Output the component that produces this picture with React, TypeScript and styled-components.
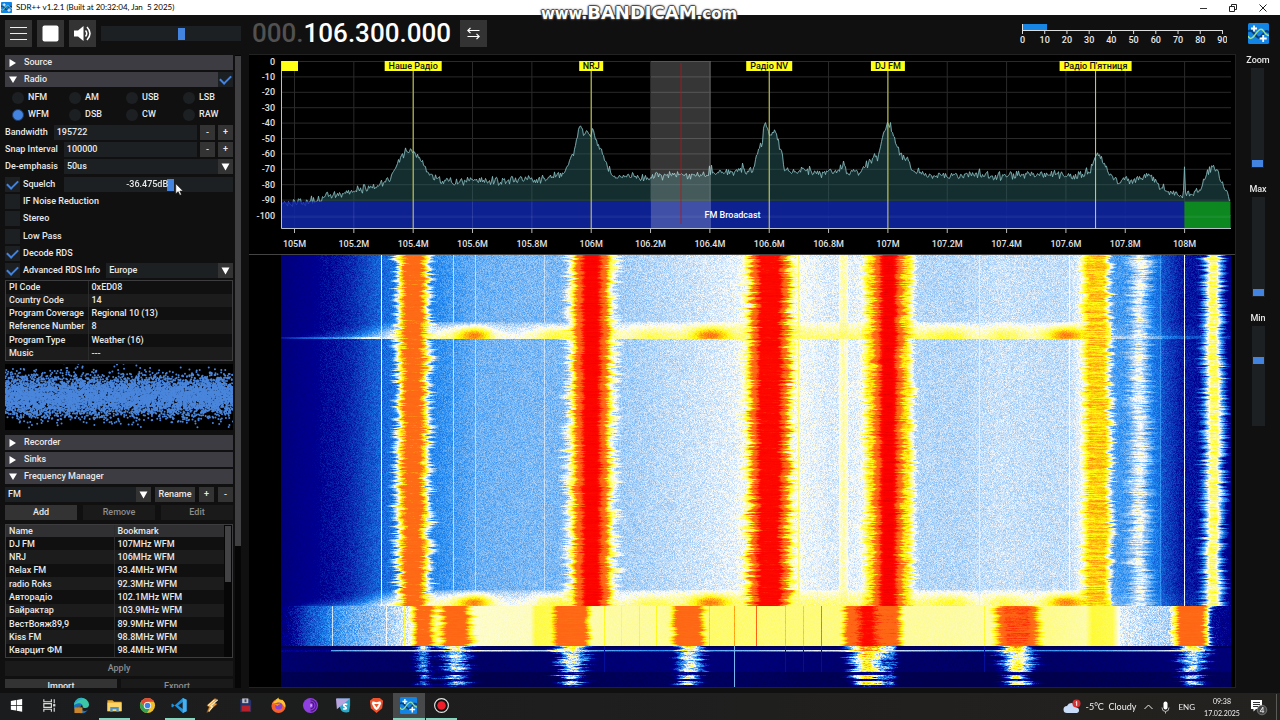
import React, { useLayoutEffect, useRef } from "react";
import styled, { createGlobalStyle, css } from "styled-components";

const color = {
  bg: "#101010",
  field: "#1d2022",
  button: "#333334",
  header: "#3c3c42",
  accent: "#4384e0",
  text: "#e8e8e8",
  muted: "#8c8c8c",
  line: "#2b2b2c",
};

const GlobalStyle = createGlobalStyle`
  * { box-sizing: border-box; }
  body {
    margin: 0;
    background: ${color.bg};
    color: ${color.text};
    font: 500 9px/13px Roboto, "Liberation Sans", sans-serif;
  }
  button, input, select { font: inherit; color: inherit; margin: 0; border: 0; border-radius: 0; }
  button { padding: 0; cursor: pointer; }
`;

/* ---------- deterministic noise ---------- */

function makeRandom(seed: number) {
  let s = seed;
  return () => {
    s = (s + 0x6d2b79f5) | 0;
    let t = Math.imul(s ^ (s >>> 15), 1 | s);
    t = (t + Math.imul(t ^ (t >>> 7), 61 | t)) ^ t;
    return ((t ^ (t >>> 14)) >>> 0) / 4294967296;
  };
}

type Point = [number, number];

function interpolate(points: Point[], x: number) {
  if (x <= points[0][0]) return points[0][1];
  for (let i = 1; i < points.length; i++) {
    if (x <= points[i][0]) {
      const [x0, y0] = points[i - 1];
      const [x1, y1] = points[i];
      return y0 + ((y1 - y0) * (x - x0)) / (x1 - x0);
    }
  }
  return points[points.length - 1][1];
}

/* ---------- shell ---------- */

const Page = styled.div`
  display: flex;
  flex-direction: column;
  height: 100vh;
  position: relative;
  overflow: hidden;
`;

const TitleBar = styled.header`
  display: flex;
  align-items: center;
  gap: 4px;
  height: 15px;
  padding: 0 12px 0 1px;
  background: #fff;
  color: #000;
  font: 400 8px/15px Lato, sans-serif;
`;

const WindowTitle = styled.h1`
  flex: 1;
  margin: 0;
  font: inherit;
  white-space: pre;
`;

const WindowControls = styled.div`
  display: flex;
  gap: 20px;
`;

const WindowButton = styled.button`
  display: grid;
  place-items: center;
  width: 10px;
  height: 15px;
  background: none;
`;

const Watermark = styled.div`
  position: absolute;
  top: 3px;
  left: 0;
  right: 2px;
  text-align: center;
  pointer-events: none;
  color: #fff;
  font: 700 15px/20px "DejaVu Sans", sans-serif;
  text-shadow: 0 0 1px #333, 1px 0 1px #444, -1px 0 1px #444, 0 1px 1px #444, 0 -1px 1px #444, 0 0 3px #666;
`;

const WatermarkName = styled.span`
  font-size: 18px;
`;

const Toolbar = styled.div`
  display: flex;
  align-items: center;
  height: 39px;
  padding: 0 11px 2px 5px;
  gap: 5px;
`;

const ToolButton = styled.button`
  display: grid;
  place-items: center;
  width: 27px;
  height: 27px;
  background: ${color.button};
`;

const Frequency = styled.output`
  margin: 0 4px 0 6px;
  font: 500 26px/27px Roboto, sans-serif;
  color: #fff;
`;

const LeadingZeros = styled.span`
  color: #515151;
`;

const Spacer = styled.div`
  flex: 1;
`;

const Body = styled.main`
  flex: 1;
  min-height: 0;
  display: grid;
  grid-template-columns: 249px minmax(0, 1fr) 44px;
`;

/* ---------- controls ---------- */

const rangeThumb = css`
  appearance: none;
  background: ${color.accent};
  border: 0;
  border-radius: 0;
`;

const Slider = styled.input.attrs({ type: "range" })<{ $width?: number }>`
  appearance: none;
  flex: ${(p) => (p.$width ? "none" : 1)};
  width: ${(p) => (p.$width ? `${p.$width}px` : "100%")};
  min-width: 0;
  height: 15px;
  padding: 1px 2px;
  background: ${color.field};
  &::-webkit-slider-thumb {
    ${rangeThumb}
    width: 7px;
    height: 12px;
  }
`;

const VerticalSlider = styled.input.attrs({ type: "range" })`
  appearance: none;
  writing-mode: vertical-lr;
  direction: rtl;
  width: 13px;
  height: 100px;
  padding: 1px;
  background: ${color.field};
  &::-webkit-slider-thumb {
    ${rangeThumb}
    width: 11px;
    height: 7px;
  }
`;

const Sidebar = styled.aside`
  display: flex;
  gap: 2px;
  padding: 1px 8px 5px 5px;
  min-height: 0;
`;

const Modules = styled.div`
  flex: 1;
  min-width: 0;
  overflow: hidden;
  display: flex;
  flex-direction: column;
`;

const SidebarScroll = styled.div`
  width: 6px;
  background: #060606;
  padding-top: 1px;
  &::before {
    content: "";
    display: block;
    height: 490px;
    background: #404042;
  }
`;

const Group = styled.div<{ $after?: number }>`
  flex: none;
  display: grid;
  gap: 2px;
  margin-bottom: ${(p) => p.$after ?? 3}px;
`;

const HeaderBar = styled.div`
  display: flex;
  height: 15px;
  background: ${color.header};
`;

const HeaderToggle = styled.button`
  flex: 1;
  display: flex;
  align-items: center;
  gap: 7px;
  padding: 0 4px;
  background: none;
  text-align: left;
`;

const ModeGrid = styled.div`
  display: grid;
  grid-template-columns: repeat(4, 57px);
  grid-auto-rows: 15px;
  row-gap: 2px;
`;

const Option = styled.label`
  display: flex;
  align-items: center;
  gap: 3px;
  height: 15px;
  white-space: nowrap;
`;

const Radio = styled.input.attrs({ type: "radio" })`
  appearance: none;
  width: 12px;
  height: 12px;
  margin: 0 1px 0 7px;
  border-radius: 50%;
  background: ${color.field};
  &:checked {
    background: ${color.accent};
    border: 1px solid #1f3a63;
  }
`;

const Check = styled.input.attrs({ type: "checkbox" })`
  appearance: none;
  display: grid;
  place-items: center;
  width: 15px;
  height: 15px;
  background: ${color.field};
  &:checked::before {
    content: "";
    width: 9px;
    height: 5px;
    margin-top: -3px;
    border: solid ${color.accent};
    border-width: 0 0 2px 2px;
    transform: rotate(-45deg);
  }
`;

const Field = styled.div<{ $gap?: number }>`
  display: flex;
  align-items: center;
  gap: ${(p) => p.$gap ?? 3}px;
  height: 15px;
`;

const FieldLabel = styled.label`
  white-space: nowrap;
  margin-right: 3px;
`;

const TextInput = styled.input`
  flex: 1;
  min-width: 0;
  height: 15px;
  padding: 0 3px 2px;
  background: ${color.field};
`;

const Button = styled.button<{ $size?: number }>`
  flex: ${(p) => (p.$size ? "none" : 1)};
  width: ${(p) => (p.$size ? `${p.$size}px` : "auto")};
  height: 15px;
  background: ${color.button};
  &:disabled {
    background: #1a1a1b;
    color: ${color.muted};
  }
`;

const SelectFrame = styled.div`
  flex: 1;
  min-width: 0;
  display: grid;
  grid-template-columns: minmax(0, 1fr) 15px;
  height: 15px;
  background: linear-gradient(to left, ${color.button} 15px, ${color.field} 15px);
  align-items: center;
  justify-items: center;
`;

const Select = styled.select`
  appearance: none;
  grid-area: 1 / 1 / 2 / 3;
  width: 100%;
  height: 15px;
  padding: 0 3px;
  background: transparent;
  option { background: ${color.field}; }
`;

const SelectArrow = styled.svg`
  grid-area: 1 / 2;
  pointer-events: none;
`;

const SliderFrame = styled.div`
  flex: 1;
  min-width: 0;
  display: grid;
  align-items: center;
  margin-left: 6px;
`;

const SliderValue = styled.output`
  grid-area: 1 / 1;
  z-index: 1;
  text-align: center;
  padding-right: 3px;
  pointer-events: none;
`;

const StackedSlider = styled(Slider)`
  grid-area: 1 / 1;
`;

const Table = styled.table<{ $first: number; $height: number; $align: "top" | "middle" }>`
  width: 100%;
  height: ${(p) => p.$height}px;
  border-collapse: collapse;
  table-layout: fixed;
  line-height: 12px;
  th, td {
    padding: 0 3px;
    text-align: left;
    vertical-align: ${(p) => p.$align};
    font-weight: 500;
    white-space: nowrap;
    border-right: 1px solid ${color.line};
  }
  th:first-child, td:first-child { width: ${(p) => p.$first}px; }
  th:last-child, td:last-child { border-right: 0; }
  tbody tr:nth-child(even) { background: #1c1c1d; }
  thead tr { background: #303033; }
`;

const TableFrame = styled.div<{ $height: number }>`
  flex: none;
  display: flex;
  height: ${(p) => p.$height}px;
  border: 1px solid #3d3d40;
  margin-bottom: 3px;
`;

const TableScroll = styled.div`
  flex: none;
  width: 8px;
  padding: 1px 1px 0 1px;
  background: #070707;
  &::before {
    content: "";
    display: block;
    height: 56px;
    background: #434345;
  }
`;

const Constellation = styled.canvas`
  flex: none;
  display: block;
  width: 100%;
  height: 66px;
  background: #000;
  margin-bottom: 5px;
`;

const Display = styled.section`
  display: flex;
  flex-direction: column;
  min-height: 0;
  background: #000;
  border: solid #222;
  border-width: 1px 1px 1px 0;
  margin-bottom: 5px;
`;

const Spectrum = styled.svg`
  flex: none;
  display: block;
  width: 100%;
  border-bottom: 1px solid #444;
  font: 500 9px Roboto, sans-serif;
`;

const WaterfallCanvas = styled.canvas`
  flex: 1;
  min-height: 0;
  display: block;
  width: 100%;
`;

const LevelColumn = styled.aside`
  display: grid;
  grid-auto-rows: 129px;
  justify-items: center;
`;

const Level = styled.label`
  display: flex;
  flex-direction: column;
  align-items: center;
  gap: 1px;
`;

/* ---------- drawings ---------- */

const Tri = ({ down = false }: { down?: boolean }) => (
  <svg width="8" height="8" viewBox="0 0 8 8" fill="#fff">
    <path d={down ? "M0 .5h8L4 7z" : "M.5 0v8L7 4z"} />
  </svg>
);

const AppLogo = ({ size }: { size: number }) => (
  <svg width={size} height={size} viewBox="0 0 21 21">
    <rect width="21" height="21" rx="1.500" fill="#1184e6" />
    <path d="M0 8.500C3 6 5 9 7 11.500s4 5 7 1 4-6 7-3" fill="none" stroke="#0b3f74" strokeWidth="2.200" />
    <path d="M0 13c2 3.500 4 3 6.500-.5S11.500 5 14 6.500s3 6 7 6" fill="none" stroke="#9fe08a" strokeWidth="1.500" />
    <path d="M6 2.500v6M3 5.500h6M15.200 12v7M11.700 15.500h7" stroke="#fff" strokeWidth="1.800" />
  </svg>
);

const axisX = (mhz: number) => 45.5 + (mhz - 105) * 296.7;
const axisY = (db: number) => 6.5 - db * 1.54;

const spectrumShape: Point[] = [
  [281, 204], [288, 205], [295, 203], [310, 200], [330, 196], [350, 191], [360, 189], [375, 188], [385, 183],
  [390, 178], [395, 168], [400, 158], [405, 152], [410, 150], [414, 150], [418, 156], [423, 164], [428, 172],
  [433, 178], [440, 180], [475, 181], [530, 180], [550, 178], [560, 175], [566, 168], [571, 158], [574, 151],
  [578, 131], [581, 128], [584, 137], [587, 129], [590, 133], [593, 132], [597, 141], [600, 148], [604, 158],
  [608, 168], [612, 175], [618, 177], [650, 177], [680, 175], [700, 175], [720, 173], [735, 172], [752, 171],
  [755, 165], [758, 150], [760, 145], [762, 148], [764, 125], [766, 123], [769, 134], [772, 133], [775, 130],
  [777, 134], [780, 150], [782, 153], [784, 168], [790, 172], [800, 170], [820, 175], [840, 170], [843, 164],
  [848, 172], [860, 173], [866, 166], [870, 160], [878, 156], [882, 140], [885, 127], [888, 124], [891, 127],
  [894, 137], [898, 150], [902, 158], [908, 160], [912, 170], [920, 175], [978, 175], [979, 164], [980, 175],
  [1000, 176], [1050, 175], [1080, 176], [1090, 172], [1093, 163], [1096, 156], [1098, 153], [1101, 158],
  [1106, 168], [1112, 176], [1118, 181], [1140, 179], [1148, 176], [1152, 178], [1160, 187], [1168, 191],
  [1180, 196], [1184, 193], [1184.5, 165], [1185, 193], [1192, 195], [1200, 189], [1206, 176], [1209, 170],
  [1213, 167], [1218, 172], [1222, 182], [1226, 192], [1230, 202],
];

function buildTrace() {
  const rnd = makeRandom(7);
  const out: string[] = [];
  for (let x = 281.5; x <= 1230; x += 1) {
    const spike = rnd() > 0.985 ? -5 : 0;
    const y = interpolate(spectrumShape, x) + (rnd() + rnd() - 1) * 5 + spike;
    out.push(`${(x - 249).toFixed(1)} ${(y - 55).toFixed(1)}`);
  }
  return out.join("L");
}

const trace = buildTrace();

const stations = [
  { name: "Наше Радіо", mhz: 105.4, width: 57 },
  { name: "NRJ", mhz: 106, width: 24 },
  { name: "Радіо NV", mhz: 106.6, width: 46 },
  { name: "DJ FM", mhz: 107, width: 34 },
  { name: "Радіо П'ятниця", mhz: 107.7, width: 72 },
];

const SpectrumChart = () => (
  <Spectrum viewBox="0 0 986 199" role="img" aria-label="Spectrum">
    {Array.from({ length: 11 }, (_, i) => (
      <g key={i}>
        <path d={`M32 ${axisY(-i * 10)}H982`} stroke="#2a2a2a" />
        <text x="26" y={axisY(-i * 10) + 3} textAnchor="end" fill="#e0e0e0">{-i * 10}</text>
      </g>
    ))}
    {Array.from({ length: 16 }, (_, i) => {
      const mhz = 105 + i / 5;
      return (
        <g key={i}>
          <path d={`M${axisX(mhz)} 6V174`} stroke="#2a2a2a" />
          <path d={`M${axisX(mhz)} 174v4`} stroke="#bbb" />
          <text x={axisX(mhz)} y="192" textAnchor="middle" fill="#e0e0e0">{`${Number(mhz.toFixed(1))}M`}</text>
        </g>
      );
    })}
    <path d={`M32 174L${trace}L982 174z`} fill="#2c6469" fillOpacity=".46" />
    <path d={`M${trace}`} fill="none" stroke="#86b9bb" strokeWidth=".9" />
    <rect x="32" y="146.500" width="903.500" height="27" fill="#0b1dac" fillOpacity=".78" />
    <rect x="935.500" y="146.500" width="46" height="27" fill="#0c951f" fillOpacity=".88" />
    <path d={`M32 162H982M${axisX(105.2)} 147v27M${axisX(105.6)} 147v27M${axisX(105.8)} 147v27`} stroke="#fff" strokeOpacity=".1" />
    <text x="483.500" y="163" textAnchor="middle" fill="#fff">FM Broadcast</text>
    <rect x="402" y="6" width="60" height="168" fill="#fff" fillOpacity=".21" />
    <path d="M432 8V169" stroke="#b01818" strokeOpacity=".8" />
    <path d="M32.500 6V173.500H982" fill="none" stroke="#b9c0c8" />
    <rect x="32.500" y="6" width="16.500" height="10" fill="#ffff16" />
    {stations.map((s) => (
      <g key={s.name}>
        <path d={`M${axisX(s.mhz)} 16V174`} stroke="#d8d854" />
        <rect x={axisX(s.mhz) - s.width / 2} y="6" width={s.width} height="10" fill="#ffff16" />
        <text x={axisX(s.mhz)} y="14" textAnchor="middle" fill="#111">{s.name}</text>
      </g>
    ))}
  </Spectrum>
);

/* The palette runs from the noise floor to full scale. */
const palette = [
  [0, 0, 32], [0, 0, 48], [0, 0, 80], [0, 0, 145], [30, 135, 240], [252, 252, 252], [255, 250, 10],
  [254, 109, 22], [254, 100, 20], [255, 10, 0], [250, 0, 0], [198, 0, 0], [159, 0, 0],
];

const floorNow: Point[] = [
  [281, 2.65], [300, 2.85], [320, 3], [340, 3.15], [355, 3.35], [370, 3.6], [385, 3.8], [430, 4], [450, 4.15],
  [480, 4.35], [530, 4.42], [560, 4.42], [615, 4.58], [660, 4.7], [700, 4.8], [740, 4.92], [800, 4.98], [830, 4.85],
  [860, 4.92], [912, 4.68], [960, 4.68], [1000, 4.78], [1040, 4.74], [1068, 4.74], [1085, 5], [1106, 4.4], [1115, 4.2],
  [1130, 4.1], [1150, 3.95], [1160, 3.8], [1162, 3.6], [1174, 3.35], [1180, 3.2], [1190, 3.15], [1200, 3.1],
  [1224, 3], [1231, 2.7],
];

const floorOld: Point[] = [
  [281, 2.7], [292, 3.05], [310, 3.6], [330, 4], [345, 4.25], [370, 4.45], [395, 4.7], [412, 5], [435, 5.35], [470, 5.2],
  [530, 5.25], [535, 5.75], [552, 5.7], [590, 5.35], [660, 5.4], [705, 5.6], [850, 5.5], [900, 5.4], [990, 5.35],
  [1040, 5.5], [1085, 5.35], [1092, 5.8], [1112, 5.7], [1120, 4.9], [1150, 4.7], [1172, 4.65], [1206, 4.6],
  [1210, 3.1], [1231, 2.8],
];

const burstTarget: Point[] = [
  [340, 4.2], [370, 4.8], [390, 5.1], [430, 5.3], [475, 5.5], [495, 5.05], [515, 5.05], [540, 5.35], [620, 5.3],
  [650, 5.45], [690, 5.5], [900, 5.6], [960, 5.5], [980, 5.25], [1000, 5.5], [1030, 5.3], [1090, 5.6],
];

interface Carrier {
  at: number;
  core: number;
  reach: number;
  peak: number;
  wobble: number;
}

/* A strong station is a broad skirt with a hotter core over it. */
const carriersNow: Carrier[] = [
  { at: 413, core: 11, reach: 21, peak: 5.9, wobble: 0.22 },
  { at: 413, core: 6, reach: 15, peak: 7.3, wobble: 0.22 },
  { at: 591, core: 15, reach: 29, peak: 5.9, wobble: 0.17 },
  { at: 591, core: 5, reach: 20, peak: 9.6, wobble: 0.14 },
  { at: 769, core: 18, reach: 30, peak: 5.8, wobble: 0.17 },
  { at: 769, core: 9, reach: 22, peak: 9.3, wobble: 0.2 },
  { at: 888, core: 19, reach: 28, peak: 6.1, wobble: 0.1 },
  { at: 888, core: 4, reach: 17, peak: 9.9, wobble: 0.18 },
  { at: 1096, core: 8, reach: 17, peak: 6.3, wobble: 0.22 },
  { at: 1139, core: 2, reach: 15, peak: 4.9, wobble: 0.35 },
  { at: 1213, core: 3, reach: 15, peak: 5.6, wobble: 0.28 },
];

const carriersOld: Carrier[] = [
  { at: 423, core: 5, reach: 14, peak: 7.3, wobble: 0.2 },
  { at: 455, core: 8, reach: 20, peak: 7.5, wobble: 0.18 },
  { at: 571, core: 12, reach: 21, peak: 7.5, wobble: 0.08 },
  { at: 688, core: 10, reach: 19, peak: 7.5, wobble: 0.12 },
  { at: 872, core: 22, reach: 32, peak: 7.8, wobble: 0.06 },
  { at: 867, core: 3, reach: 14, peak: 9.2, wobble: 0.1 },
  { at: 1017, core: 11, reach: 27, peak: 8.2, wobble: 0.12 },
  { at: 1191, core: 10, reach: 22, peak: 7.5, wobble: 0.16 },
];

const carriersQuiet: Carrier[] = [
  { at: 423, core: 1, reach: 12, peak: 4, wobble: 0.4 },
  { at: 455, core: 3, reach: 20, peak: 4.6, wobble: 0.4 },
  { at: 571, core: 4, reach: 21, peak: 4.8, wobble: 0.35 },
  { at: 688, core: 3, reach: 18, peak: 4.9, wobble: 0.3 },
  { at: 884, core: 8, reach: 14, peak: 3.7, wobble: 0.2 },
  { at: 867, core: 4, reach: 25, peak: 6, wobble: 0.3 },
  { at: 1017, core: 3, reach: 24, peak: 5.5, wobble: 0.3 },
  { at: 1192, core: 3, reach: 20, peak: 4.7, wobble: 0.35 },
];

const burstBlobs: Point[] = [[474, 1.5], [556, 0.5], [650, 0.3], [710, 1.5], [950, 0.4], [1007, 0.3], [1065, 1.5]];

const spursNow: Point[] = [[381, 5], [453, 4.7], [475, 4.7], [544, 4.75], [798, 5.5], [817, 5.5], [979, 5.5], [1069, 5.1], [1160, 4.1], [1184, 5]];
const spursOld: Point[] = [[332, 4.8], [386, 5], [404, 5.7], [604, 5.9], [621, 5.7], [639, 5.9], [656, 5.9], [709, 6.2], [734, 6.6], [756, 8], [785, 6.3], [803, 6.3], [821, 7], [984, 5.8]];

const WIDTH = 986;
const HEIGHT = 432;

function drawWaterfall(ctx: CanvasRenderingContext2D) {
  const rnd = makeRandom(42);
  const image = ctx.createImageData(WIDTH, HEIGHT);
  const drift: Record<string, { left: number; right: number; slow: number }> = {};
  for (let row = 0; row < HEIGHT; row++) {
    const y = row + 255;
    const old = y >= 606 && y < 646;
    const quiet = y >= 646;
    const carriers = quiet ? carriersQuiet : old ? carriersOld : carriersNow;
    const edges = carriers.map((c) => {
      const key = `${c.at}-${c.peak}`;
      const d = drift[key] ?? { left: 0, right: 0, slow: 0 };
      d.left = d.left * 0.3 + (rnd() + rnd() - 1) * 1.6;
      d.right = d.right * 0.3 + (rnd() + rnd() - 1) * 1.6;
      d.slow = d.slow * 0.94 + (rnd() - 0.5) * 0.35;
      drift[key] = d;
      return {
        ...c,
        l: 1 + (d.left + d.slow * 0.4) * c.wobble,
        r: 1 + (d.right + d.slow * 0.4) * c.wobble,
        shift: d.slow * c.wobble * 6,
        level: c.peak + (rnd() - 0.5) * 0.5,
      };
    });
    let burst = 0;
    if (y >= 322 && y < 339) burst = (y - 321) / 17;
    if (y >= 590 && y < 606) burst = (y - 589) / 16;
    let smear = 0;
    for (let px = 0; px < WIDTH; px++) {
      const x = px + 249;
      const offset = (row * WIDTH + px) * 4;
      image.data[offset + 3] = 255;
      if (x < 281 || x > 1230) continue;
      smear = smear * 0.7 + (rnd() - 0.5) * 0.6;
      let v = interpolate(old ? floorOld : floorNow, x);
      let grain = 0.26;
      if (x < 320) grain = 0.1;
      if (old) grain = x > 410 && x < 1120 ? 0.08 : 0.35;
      if (quiet) {
        v = 2.45 - (y > 671 ? 0.4 : 0) + 0.15 * Math.sin(x / 90);
        grain = 0.12;
        if (y < 648) v = 2.1;
        if (y === 650 || y === 651) v = x > 330 ? (y === 650 ? 4.5 : 3.7) + 0.4 * Math.sin(x / 60) : 3;
        if (x > 1204) v = Math.min(v, 2.6);
      }
      if (!old && !quiet) {
        if (x >= 839 && x <= 847) v = 5.35 - Math.abs(x - 843) * 0.05;
        if (burst > 0) {
          if (x > 1110) {
            v += y >= 336 && y < 339 ? 0.5 : 0.2 * burst;
          } else {
            const side = Math.max(0, Math.min(1, (x - 281) / 115));
            const target = Math.max(v, interpolate(burstTarget, x));
            v += (target - v) * side * Math.pow(burst, 0.6 + (1 - side) * 5);
            if (x < 380 && (y === 337 || y === 338)) v += 0.5;
          }
          for (const [at, gain] of burstBlobs) {
            const spread = (x - at) / 17;
            const depth = (burst - 0.8) / 0.4;
            v += gain * Math.exp(-spread * spread - depth * depth);
          }
        }
      }
      v += (rnd() + rnd() - 1) * grain;
      for (const [at, level] of old ? spursOld : quiet ? [] : spursNow) {
        if (x === at) v = Math.max(v, level + (rnd() - 0.5) * 0.2);
      }
      if (quiet && y < 672 && (x === 604 || x === 785 || x === 803 || x === 821 || x === 984)) v = 3.1;
      if (quiet && x === 734) v = 4.4;
      const faded = quiet && ((y > 671 && y < 675) || (y > 678 && y < 681) || y > 684);
      for (const e of edges) {
        const dx = x - e.at - e.shift;
        const scale = dx < 0 ? e.l : e.r;
        const d = Math.abs(dx) / Math.max(0.35, scale);
        if (d >= e.reach) continue;
        const peak = faded ? 2.9 : quiet && y < 651 ? e.level + 0.9 : e.level;
        const near = Math.pow(Math.min(1, (e.reach - d) / (e.reach - e.core)), 1.2);
        const level = v + (peak - v) * near + smear * (quiet ? 1.4 : 0.6) * Math.min(1, near * 2);
        if (peak > v) v = Math.max(v, level);
      }
      const clamped = Math.max(0, Math.min(palette.length - 1.01, v));
      const i = Math.floor(clamped);
      const f = clamped - i;
      for (let ch = 0; ch < 3; ch++) {
        image.data[offset + ch] = palette[i][ch] + (palette[i + 1][ch] - palette[i][ch]) * f;
      }
    }
  }
  ctx.putImageData(image, 0, 0);
}

const Waterfall = () => {
  const ref = useRef<HTMLCanvasElement>(null);
  useLayoutEffect(() => {
    const ctx = ref.current?.getContext("2d");
    if (ctx) drawWaterfall(ctx);
  }, []);
  return <WaterfallCanvas ref={ref} width={WIDTH} height={HEIGHT} role="img" aria-label="Waterfall" />;
};

const RdsConstellation = () => {
  const ref = useRef<HTMLCanvasElement>(null);
  useLayoutEffect(() => {
    const ctx = ref.current?.getContext("2d");
    if (!ctx) return;
    const rnd = makeRandom(3);
    ctx.clearRect(0, 0, 228, 66);
    ctx.fillStyle = "#4a86dc";
    for (let i = 0; i < 6800; i++) {
      const spread = rnd() + rnd() + rnd() + rnd() - 2;
      ctx.beginPath();
      ctx.arc(rnd() * 228, 32 + spread * 18, 1, 0, Math.PI * 2);
      ctx.fill();
    }
  }, []);
  return <Constellation ref={ref} width={228} height={66} role="img" aria-label="RDS constellation" />;
};

/* ---------- signal meter ---------- */

const Meter = styled.svg`
  margin-right: 16px;
  font: 500 9px Roboto, sans-serif;
`;

const SignalMeter = () => (
  <Meter width="212" height="30" viewBox="0 0 212 30" role="img" aria-label="SNR">
    <rect x="7" y="5" width="25" height="6" fill="#1785e4" />
    <path d="M7.500 5V15M7.500 11.500H207.500" stroke="#ddd" fill="none" />
    {Array.from({ length: 10 }, (_, i) => (
      <g key={i}>
        <path d={`M${7.5 + i * 22.22} 11v4`} stroke="#ddd" />
        <text x={7.5 + i * 22.22} y="24" textAnchor="middle" fill="#e8e8e8">{i * 10}</text>
      </g>
    ))}
  </Meter>
);

/* ---------- sidebar ---------- */

const ModuleHeader = ({ title, open = false, toggle = false }: { title: string; open?: boolean; toggle?: boolean }) => (
  <HeaderBar>
    <HeaderToggle aria-expanded={open}>
      <Tri down={open} />
      {title}
    </HeaderToggle>
    {toggle && <Check defaultChecked aria-label={`Enable ${title}`} />}
  </HeaderBar>
);

const DropDown = ({ id, label, options }: { id?: string; label?: string; options: string[] }) => (
  <SelectFrame>
    <Select id={id} aria-label={label}>
      {options.map((o) => <option key={o}>{o}</option>)}
    </Select>
    <SelectArrow width="9" height="8" viewBox="0 0 9 8">
      <path d="M.5 .5h8L4.500 7.500z" fill="#fff" />
    </SelectArrow>
  </SelectFrame>
);

const CheckRow = ({ label, on = false }: { label: string; on?: boolean }) => (
  <Option>
    <Check defaultChecked={on} />
    {label}
  </Option>
);

const NumberField = ({ id, label, value }: { id: string; label: string; value: string }) => (
  <Field>
    <FieldLabel htmlFor={id}>{label}</FieldLabel>
    <TextInput id={id} defaultValue={value} />
    <Button $size={15} aria-label={`Decrease ${label}`}>-</Button>
    <Button $size={15} aria-label={`Increase ${label}`}>+</Button>
  </Field>
);

const rdsInfo = [
  ["PI Code", "0xED08"],
  ["Country Code", "14"],
  ["Program Coverage", "Regional 10 (13)"],
  ["Reference Number", "8"],
  ["Program Type", "Weather (16)"],
  ["Music", "---"],
];

const bookmarks = [
  ["DJ FM", "107MHz WFM"],
  ["NRJ", "106MHz WFM"],
  ["Relax FM", "93.4MHz WFM"],
  ["radio Roks", "92.3MHz WFM"],
  ["Авторадіо", "102.1MHz WFM"],
  ["Байрактар", "103.9MHz WFM"],
  ["ВестВояж89,9", "89.9MHz WFM"],
  ["Kiss FM", "98.8MHz WFM"],
  ["Кварцит ФМ", "98.4MHz WFM"],
];

const modes = ["NFM", "AM", "USB", "LSB", "WFM", "DSB", "CW", "RAW"];

const ModulePanel = () => (
  <Sidebar>
    <Modules>
      <Group>
        <ModuleHeader title="Source" />
        <ModuleHeader title="Radio" open toggle />
      </Group>
      <Group>
        <ModeGrid role="radiogroup" aria-label="Demodulator">
          {modes.map((m) => (
            <Option key={m}>
              <Radio name="mode" defaultChecked={m === "WFM"} />
              {m}
            </Option>
          ))}
        </ModeGrid>
      </Group>
      <Group>
        <NumberField id="bandwidth" label="Bandwidth" value="195722" />
        <NumberField id="snap" label="Snap Interval" value="100000" />
        <Field>
          <FieldLabel htmlFor="deemphasis">De-emphasis</FieldLabel>
          <DropDown id="deemphasis" options={["50us", "75us"]} />
        </Field>
      </Group>
      <Group>
        <Field>
          <CheckRow label="Squelch" on />
          <SliderFrame>
            <SliderValue>-36.475dB</SliderValue>
            <StackedSlider min="-100" max="0" step="0.025" defaultValue="-36.475" aria-label="Squelch level" />
          </SliderFrame>
        </Field>
        <CheckRow label="IF Noise Reduction" />
        <CheckRow label="Stereo" />
      </Group>
      <Group $after={2}>
        <CheckRow label="Low Pass" />
        <CheckRow label="Decode RDS" on />
        <Field $gap={6}>
          <CheckRow label="Advanced RDS Info" on />
          <DropDown label="RDS region" options={["Europe", "North America"]} />
        </Field>
      </Group>
      <TableFrame $height={81}>
        <Table $first={82} $height={79} $align="top">
          <tbody>
            {rdsInfo.map(([name, value]) => (
              <tr key={name}>
                <th scope="row">{name}</th>
                <td>{value}</td>
              </tr>
            ))}
          </tbody>
        </Table>
      </TableFrame>
      <RdsConstellation />
      <Group>
        <ModuleHeader title="Recorder" />
        <ModuleHeader title="Sinks" />
        <ModuleHeader title="Frequency Manager" open />
      </Group>
      <Group>
        <Field $gap={4}>
          <DropDown label="Bookmark list" options={["FM"]} />
          <Button $size={40}>Rename</Button>
          <Button $size={15} aria-label="Add list">+</Button>
          <Button $size={15} aria-label="Delete list">-</Button>
        </Field>
      </Group>
      <Group $after={4}>
        <Field $gap={6}>
          <Button>Add</Button>
          <Button disabled>Remove</Button>
          <Button disabled>Edit</Button>
        </Field>
      </Group>
      <TableFrame $height={134}>
        <Table $first={108} $height={132} $align="middle">
          <thead>
            <tr><th scope="col">Name</th><th scope="col">Bookmark</th></tr>
          </thead>
          <tbody>
            {bookmarks.map(([name, value]) => (
              <tr key={name}>
                <td>{name}</td>
                <td>{value}</td>
              </tr>
            ))}
          </tbody>
        </Table>
        <TableScroll />
      </TableFrame>
      <Group>
        <Field><Button disabled>Apply</Button></Field>
      </Group>
      <Group>
        <Field $gap={4}>
          <Button>Import</Button>
          <Button disabled>Export</Button>
        </Field>
      </Group>
    </Modules>
    <SidebarScroll />
  </Sidebar>
);

/* ---------- taskbar ---------- */

const Taskbar = styled.footer`
  display: flex;
  align-items: stretch;
  justify-content: space-between;
  height: 27px;
  background: linear-gradient(90deg, #1b1c1d, #1e1e1e 45%, #24221f);
  color: #f0f0f0;
  font: 400 8px/12px Lato, "Open Sans", sans-serif;
`;

const TaskList = styled.nav`
  flex: 0 1 458px;
  display: grid;
  grid-template-columns: repeat(14, 1fr);
`;

const TaskButton = styled.button<{ $running?: boolean; $active?: boolean }>`
  display: grid;
  place-items: center;
  background: ${(p) => (p.$active ? "#47494a" : "none")};
  border-bottom: 2px solid transparent;
  border-image: ${(p) =>
    p.$running ? `linear-gradient(90deg, transparent ${p.$active ? 0 : 3}px, #7fd8bd ${p.$active ? 0 : 3}px calc(100% - ${p.$active ? 0 : 3}px), transparent 0) 2` : "none"};
`;

const Tray = styled.div`
  display: flex;
  align-items: center;
  gap: 8px;
  padding: 1px 2px 0 0;
`;

const TrayButton = styled.button`
  display: flex;
  align-items: center;
  gap: 5px;
  background: none;
  white-space: pre;
`;

const WeatherButton = styled(TrayButton)`
  font-size: 9px;
`;

const Clock = styled.time`
  width: 38px;
  text-align: center;
  font-size: 7px;
  white-space: nowrap;
`;

const DesktopEdge = styled.div`
  align-self: stretch;
  width: 2px;
  border-left: 1px solid #5a5a58;
`;

const Glyph = ({ children }: { children: React.ReactNode }) => (
  <svg width="17" height="17" viewBox="0 0 18 18">{children}</svg>
);

const tasks: { name: string; running?: boolean; active?: boolean; icon: React.ReactNode }[] = [
  { name: "Start", icon: <Glyph><path d="M3 4.200l5.500-.9v5.200H3zM9.200 3.200l5.800-1v6.300H9.200zM3 9.200h5.500v5.200L3 13.500zM9.200 9.200H15v6.300l-5.800-1z" fill="#fff" /></Glyph> },
  { name: "Task View", icon: <Glyph><path d="M3 2.500V5h8V2.500M3 15.500V13h8v2.500M3 7h8v4H3zM14 2.500v4M14 11.500v4" fill="none" stroke="#ddd" strokeWidth="1.200" /><path d="M12.800 7.500h2.400v2.500h-2.400z" fill="#ddd" /></Glyph> },
  {
    name: "Edge",
    icon: (
      <Glyph>
        <path d="M1 9.500A8 8 0 0 1 17 8c0 3-2.500 4-5 3.600C9.500 11.300 11 9 9 8 6.500 6.800 3 7.500 1 9.500z" fill="#3cc6a5" />
        <path d="M1 9.500C3 6 8.500 5.500 10 8.500c-2 .5-3 2.500-1.500 4.500s5 2.500 7.300.4A8 8 0 0 1 1 9.500z" fill="#1673c9" />
        <path d="M1 8C2 3 7 0 12 2c-5 0-8 3-11 6z" fill="#2aa5df" />
        <path d="M1.500 11h8.500v6H1.500z" fill="#c9852b" /><path d="M4.500 11V9.500h3V11" stroke="#8a5310" fill="none" />
      </Glyph>
    ),
  },
  {
    name: "Explorer",
    running: true,
    icon: (
      <Glyph>
        <path d="M1.500 3.500h5.500L8.500 5h8v10h-15z" fill="#e3a92f" /><path d="M1.500 6h15v9h-15z" fill="#fbd568" />
        <path d="M4.500 15.500v-5h9v5H11v-2.500H7v2.500z" fill="#4f93c9" />
      </Glyph>
    ),
  },
  {
    name: "Chrome",
    icon: (
      <Glyph>
        <circle cx="9" cy="9" r="8" fill="#f0c02c" />
        <path d="M2.100 5A8 8 0 0 1 16 5H9a4 4 0 0 0-3.500 6z" fill="#dd4a3b" />
        <path d="M2.100 5A8 8 0 0 0 8.500 17l3.500-6a4 4 0 0 1-6.500 0z" fill="#35a155" />
        <circle cx="9" cy="9" r="3.800" fill="#fff" /><circle cx="9" cy="9" r="3" fill="#3e7fe8" />
      </Glyph>
    ),
  },
  {
    name: "VS Code",
    running: true,
    icon: (
      <Glyph>
        <path d="M12.500 1L3 9.800 1.200 11 .5 10.300V7.700L1.200 7 3 8.200 12.500 17l4-2V3z" fill="#2191d8" />
        <path d="M12.500 5.300v7.400L7.500 9z" fill="#1d2226" /><path d="M12.500 1l4 2v12l-4 2z" fill="#45b0f2" />
      </Glyph>
    ),
  },
  {
    name: "Winamp",
    icon: (
      <Glyph>
        <path d="M11.500 1.500L3 9l2.500 1.500L3 16.500l11-9-3-1.500 3-3.500z" fill="#e8a035" stroke="#8a4a12" strokeWidth=".6" />
        <path d="M14.500 3L7 9.500l2 1-4 5M4.500 9L11 3" fill="none" stroke="#f8ecca" strokeWidth="1.200" />
      </Glyph>
    ),
  },
  {
    name: "Backup",
    icon: (
      <Glyph>
        <path d="M3.500 2h10l1.500 2v12H3.500z" fill="#26336b" /><path d="M5.500 1.500h6.500v5H5.500z" fill="#bfc2cc" />
        <path d="M8 2.500h2v3H8z" fill="#444b66" /><path d="M5 9h9v6H5z" fill="#b8202b" />
      </Glyph>
    ),
  },
  {
    name: "Firefox",
    icon: (
      <Glyph>
        <circle cx="9" cy="9.500" r="7.500" fill="#f5612e" />
        <path d="M2 6C3 9 4 3.500 6 4c0-1.500 2-2.500 3-3.500C9 3 12 4 13 3c3 2.500 4 6 3 8.500C14 8 12 6 9 6S3 7.500 2 6z" fill="#fdc630" />
        <circle cx="9.300" cy="9.500" r="3.800" fill="#8845d6" /><path d="M5 8c2-1.500 4-.5 6-1-1 1.800-2.500 1.200-3 2.500z" fill="#fb8b2d" />
      </Glyph>
    ),
  },
  {
    name: "Tor Browser",
    icon: (
      <Glyph>
        <circle cx="9" cy="9" r="8" fill="#8f3fe0" />
        <path d="M9 3a6 6 0 0 1 0 12M9 5.500a3.500 3.500 0 0 1 0 7" fill="none" stroke="#4d177f" strokeWidth="1.300" />
        <path d="M9 7.500a1.500 1.500 0 0 1 0 3z" fill="#e9c8ff" />
      </Glyph>
    ),
  },
  {
    name: "Sharing",
    icon: (
      <Glyph>
        <path d="M2 1.500h14V9l-1 7c-4 1-8 0-9-3z" fill="#2aa9c9" /><path d="M1 1.500h15L2 13z" fill="#b8a4df" />
        <path d="M13 8C10 6.500 8 8.800 10.200 10s2.800 3.300-1.500 2.500" fill="none" stroke="#fff" strokeWidth="1.800" />
      </Glyph>
    ),
  },
  {
    name: "Brave",
    icon: (
      <Glyph>
        <path d="M5.500 1h7l3.500 3-1 8-6 5-6-5-1-8z" fill="#f0532c" /><path d="M5 4.500l4 1 4-1 1 2.500-2.500 5L9 14l-2.500-2L4 7z" fill="#fff" />
        <path d="M6.500 7.500h5L9 11z" fill="#f0532c" />
      </Glyph>
    ),
  },
  { name: "SDR++", running: true, active: true, icon: <AppLogo size={17} /> },
  {
    name: "Bandicam",
    running: true,
    icon: <Glyph><circle cx="9" cy="9" r="7.300" fill="#111" stroke="#e6e6e6" strokeWidth="1.200" /><circle cx="9" cy="9" r="4.500" fill="#ee1f2b" /></Glyph>,
  },
];

const Pointer = styled.svg`
  position: absolute;
  left: 175px;
  top: 183px;
  pointer-events: none;
`;

export default function App() {
  return (
    <Page>
      <GlobalStyle />
      <TitleBar>
        <AppLogo size={11} />
        <WindowTitle>{"SDR++ v1.2.1 (Built at 20:32:04, Jan  5 2025)"}</WindowTitle>
        <WindowControls>
          <WindowButton aria-label="Minimize">
            <svg width="7" height="8" viewBox="0 0 7 8"><path d="M0 4.500h7" stroke="#333" /></svg>
          </WindowButton>
          <WindowButton aria-label="Restore">
            <svg width="8" height="8" viewBox="0 0 8 8" fill="none" stroke="#222"><path d="M.5 2.500h5v5h-5zM2.500 2.500v-2h5v5h-2" /></svg>
          </WindowButton>
          <WindowButton aria-label="Close">
            <svg width="8" height="8" viewBox="0 0 8 8"><path d="M.5 .5l7 7M7.500 .5l-7 7" stroke="#222" /></svg>
          </WindowButton>
        </WindowControls>
      </TitleBar>

      <Toolbar>
        <ToolButton aria-label="Menu">
          <svg width="17" height="13" viewBox="0 0 17 13"><path d="M0 .5h17M0 6.500h17M0 12.500h17" stroke="#eee" /></svg>
        </ToolButton>
        <ToolButton aria-label="Stop">
          <svg width="17" height="17" viewBox="0 0 17 17"><rect x=".5" y=".5" width="16" height="16" rx="2" fill="#fff" /></svg>
        </ToolButton>
        <ToolButton aria-label="Mute">
          <svg width="19" height="17" viewBox="0 0 19 17">
            <path d="M1 5.500h4L10.500 1v15L5 11.500H1z" fill="#fff" />
            <path d="M12.500 5.500q2.500 3 0 6M14 2q6 6.500 0 13" fill="none" stroke="#fff" strokeWidth="1.500" />
          </svg>
        </ToolButton>
        <Slider $width={140} min="0" max="100" defaultValue="58" aria-label="Volume" />
        <Frequency><LeadingZeros>000.</LeadingZeros>106.300.000</Frequency>
        <ToolButton aria-label="Tuning mode">
          <svg width="13" height="13" viewBox="0 0 13 13" fill="none" stroke="#fff" strokeWidth="1.200">
            <path d="M12.500 3.500H1M3.500 .8L.8 3.500l2.700 2.700M.5 9.500H12M9.500 6.800l2.700 2.700-2.700 2.700" />
          </svg>
        </ToolButton>
        <Spacer />
        <SignalMeter />
        <AppLogo size={21} />
      </Toolbar>

      <Body>
        <ModulePanel />
        <Display>
          <SpectrumChart />
          <Waterfall />
        </Display>
        <LevelColumn>
          <Level>Zoom<VerticalSlider min="0" max="100" defaultValue="0" /></Level>
          <Level>Max<VerticalSlider min="0" max="100" defaultValue="0" /></Level>
          <Level>Min<VerticalSlider min="0" max="100" defaultValue="67" /></Level>
        </LevelColumn>
      </Body>

      <Taskbar>
        <TaskList aria-label="Taskbar">
          {tasks.map((t) => (
            <TaskButton key={t.name} $running={t.running} $active={t.active} aria-label={t.name}>{t.icon}</TaskButton>
          ))}
        </TaskList>
        <Tray>
          <WeatherButton>
            <svg width="18" height="16" viewBox="0 0 18 16">
              <path d="M4 14a3.500 3.500 0 0 1 0-7 5 5 0 0 1 9.500 1.500A2.800 2.800 0 0 1 14 14z" fill="#c9dcf7" />
              <circle cx="13.500" cy="4.500" r="4" fill="#d03434" /><path d="M12.700 3.200l1-.7v4.300" fill="none" stroke="#fff" />
            </svg>
            {"-5°C  Cloudy"}
          </WeatherButton>
          <TrayButton aria-label="Show hidden icons">
            <svg width="9" height="6" viewBox="0 0 9 6"><path d="M.5 5l4-4 4 4" fill="none" stroke="#eee" /></svg>
          </TrayButton>
          <TrayButton aria-label="Microphone">
            <svg width="9" height="13" viewBox="0 0 9 13"><rect x="2.500" y=".5" width="4" height="8" rx="2" fill="#fff" /><path d="M1 6.500q0 4 3.500 4T8 6.500M4.500 10.500v2" fill="none" stroke="#bbb" /></svg>
          </TrayButton>
          <TrayButton>ENG</TrayButton>
          <Clock>09:38<br />17.02.2025</Clock>
          <TrayButton aria-label="4 notifications">
            <svg width="19" height="18" viewBox="0 0 19 18">
              <path d="M2 2h11v9H7l-2.500 2.500V11H2z" fill="#fff" /><path d="M4 4.500h7M4 6.500h7M4 8.500h5" stroke="#333" />
              <circle cx="13" cy="12" r="4.800" fill="#444" stroke="#999" strokeWidth=".6" />
              <text x="13" y="15" textAnchor="middle" fill="#fff" fontSize="8">4</text>
            </svg>
          </TrayButton>
          <DesktopEdge />
        </Tray>
      </Taskbar>

      <Watermark>www.<WatermarkName>BANDICAM</WatermarkName>.com</Watermark>
      <Pointer width="9" height="13" viewBox="0 0 9 13">
        <path d="M.8 .8v10l2.400-2.200 1.700 3.600 1.500-.7-1.600-3.500H8z" fill="#fff" stroke="#111" strokeWidth="0.5" />
      </Pointer>
    </Page>
  );
}
